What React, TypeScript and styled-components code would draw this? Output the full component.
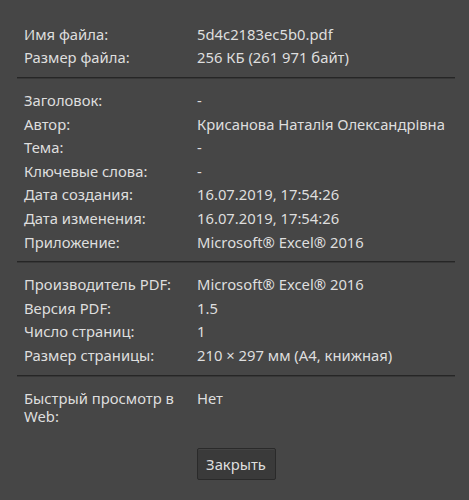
import styled, { createGlobalStyle } from 'styled-components';

interface Field {
  label: string;
  value: string;
}

const sections: Field[][] = [
  [
    { label: 'Имя файла:', value: '5d4c2183ec5b0.pdf' },
    { label: 'Размер файла:', value: '256 КБ (261 971 байт)' },
  ],
  [
    { label: 'Заголовок:', value: '-' },
    { label: 'Автор:', value: 'Крисанова Наталія Олександрівна' },
    { label: 'Тема:', value: '-' },
    { label: 'Ключевые слова:', value: '-' },
    { label: 'Дата создания:', value: '16.07.2019, 17:54:26' },
    { label: 'Дата изменения:', value: '16.07.2019, 17:54:26' },
    { label: 'Приложение:', value: 'Microsoft® Excel® 2016' },
  ],
  [
    { label: 'Производитель PDF:', value: 'Microsoft® Excel® 2016' },
    { label: 'Версия PDF:', value: '1.5' },
    { label: 'Число страниц:', value: '1' },
    { label: 'Размер страницы:', value: '210 × 297 мм (A4, книжная)' },
  ],
  [{ label: 'Быстрый просмотр в Web:', value: 'Нет' }],
];

const GlobalStyle = createGlobalStyle`
  html, body {
    margin: 0;
    background: #464646;
  }
`;

const Dialog = styled.div`
  width: 469px;
  height: 500px;
  box-sizing: border-box;
  padding: 22px 14px 0 17px;
  background: #464646;
  color: #dedede;
  font-family: 'Noto Sans', 'Open Sans', sans-serif;
  font-size: 14.8px;
`;

const Section = styled.div`
  display: grid;
  grid-template-columns: 173px 1fr;
  padding-left: 7px;
`;

const Label = styled.div`
  padding: 2.8px 8px 2.8px 0;
  line-height: 18px;
`;

const Value = styled.div`
  padding: 2.8px 0;
  line-height: 18px;
  white-space: nowrap;
`;

const Separator = styled.hr`
  margin: 8px 0 9px;
  border: 0;
  height: 1px;
  background: #262626;
  border-bottom: 1px solid #383838;
`;

const Footer = styled.div`
  display: flex;
  justify-content: center;
  margin-top: 21px;
`;

const Button = styled.button`
  width: 79px;
  height: 32px;
  padding: 0;
  background: #3a3a3a;
  border: 1px solid #2a2a2a;
  border-radius: 2px;
  box-shadow: inset 0 1px 0 rgba(255, 255, 255, 0.05);
  color: #dedede;
  font-family: inherit;
  font-size: 14.8px;
  cursor: pointer;
`;

export default function App() {
  return (
    <>
      <GlobalStyle />
      <Dialog>
        {sections.map((fields, i) => (
          <div key={i}>
            {i > 0 && <Separator />}
            <Section>
              {fields.map(f => (
                <>
                  <Label key={f.label}>{f.label}</Label>
                  <Value key={f.label + 'v'}>{f.value}</Value>
                </>
              ))}
            </Section>
          </div>
        ))}
        <Footer>
          <Button>Закрыть</Button>
        </Footer>
      </Dialog>
    </>
  );
}
